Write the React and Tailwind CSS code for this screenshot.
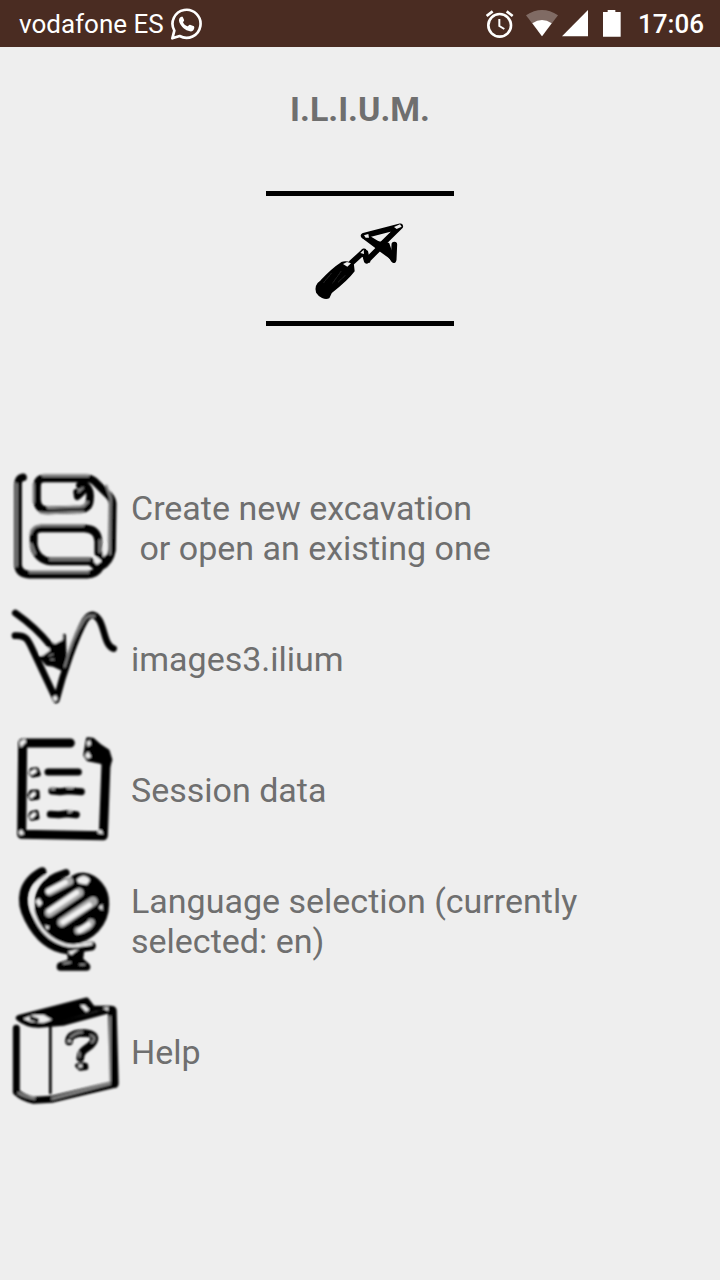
const StatusBar = () => (
  <header className="flex h-[47px] items-center justify-between bg-[#4a2c22] pl-[19px] pr-4 text-white">
    <div className="flex items-center gap-1.5">
      <span className="text-[26px] leading-8">vodafone ES</span>
      <svg className="h-8 w-8" viewBox="0 0 96 96" fill="none" stroke="currentColor">
        <path d="M7 91 L13 68 A42 42 0 1 1 29 84 Z" strokeWidth="8" strokeLinejoin="round" />
        <path
          d="M34 26 C28 28 25 35 28 43 C34 57 46 68 60 70 C67 71 72 66 73 59 L72 55 L60 50 C57 49 55 55 52 55 C46 53 41 48 39 43 C39 40 44 39 42 35 L38 26 Z"
          fill="currentColor"
          stroke="none"
        />
      </svg>
    </div>
    <div className="flex items-center">
      {/* Alarm */}
      <svg className="h-7 w-7" viewBox="0 0 84 84" fill="none" stroke="currentColor" strokeWidth="8">
        <circle cx="41" cy="46" r="34" />
        <path d="M40 27 V48 L55 57" strokeWidth="6" />
        <path d="M2 18 L20 4 M62 4 L80 18" />
      </svg>
      {/* Wifi */}
      <svg className="ml-3 h-7 w-8" viewBox="0 0 96 84" fill="currentColor">
        <path d="M0 16 Q48 -16 96 16 L48 79 Z" opacity="0.3" />
        <path d="M19 40 Q48 20 77 40 L48 79 Z" />
      </svg>
      {/* Mobile signal */}
      <svg className="ml-1 h-7 w-7" viewBox="0 0 84 84" fill="currentColor">
        <path d="M78 0 V79 H0 Z" />
      </svg>
      {/* Battery */}
      <svg className="ml-3 h-7 w-5" viewBox="0 0 60 84" fill="currentColor">
        <path d="M3 6 H17 V0 H40 V6 H56 V80 H3 Z" />
      </svg>
      <span className="ml-4 text-[26px] font-medium leading-8">17:06</span>
    </div>
  </header>
);

const TrowelLogo = () => (
  <svg className="h-[125px] w-[188px]" viewBox="48 348 564 375" fill="none" stroke="#000" strokeLinecap="round" strokeLinejoin="round">
    <g filter="url(#soften-light)">
      <path d="M341 467 L451 439 L387 502 Z" strokeWidth="17" />
      <path d="M343 468 L390 496 M400 490 L431 540 L433 494 M392 500 L350 542 L342 514 L305 548" strokeWidth="17" />
      <path d="M378 486 L415 491 L434 545 L416 530 L392 513 Z M338 510 L351 514 L358 545 L346 543 Z" fill="#000" strokeWidth="6" />
      <path
        d="M275 549 C285 545 302 547 309 555 L311 573 C291 600 265 620 243 637 L236 652 C226 658 208 649 201 637 C196 620 202 611 214 603 C232 583 252 564 275 549 Z"
        fill="#000"
        strokeWidth="6"
      />
      <path d="M245 579 L220 609 M273 574 L248 609 M286 586 L265 606" stroke="#222" strokeWidth="3" />
      <path d="M432 441 L450 433 L455 440 L440 447 Z M279 552 L291 546 L303 550 L292 560 Z M342 466 L355 462 L357 473 L347 473 Z M331 519 L341 509 L342 522 Z" fill="#eee" stroke="none" />
    </g>
  </svg>
);

const DisketteIcon = () => (
  <svg className="size-[131px] shrink-0" viewBox="0 6 393 393" fill="none" strokeLinecap="round" strokeLinejoin="round">
    <g filter="url(#soften)">
      <g stroke="#000" strokeWidth="23">
        <path d="M69 52 Q54 55 54 74 V315 Q56 342 88 344 H262 Q288 344 302 320 Q330 305 336 270 L338 130 Q337 118 328 108 L285 65 Q274 55 258 55 H134 C115 55 111 66 111 82 V120 C112 141 125 151 143 151 L245 148 C264 145 270 132 270 113 C272 92 263 76 245 74" />
        <path d="M238 76 L252 78 C254 94 244 99 232 110 L230 96" strokeWidth="20" />
        <path d="M101 222 C103 209 113 205 125 205 H253 C281 206 294 219 295 243 V279 L318 298 M101 222 V254 C106 287 128 303 151 304 H270 L294 323" />
      </g>
      <g stroke="#858585" strokeWidth="7">
        <path d="M50 72 V318 M129 48 H265 M101 72 V127 M121 157 Q135 161 151 159 L249 155 M264 126 L250 140 L144 144" />
        <path d="M92 221 C97 205 106 197 123 197 H250 M94 252 L105 281 M150 299 H268 M89 337 H265 M319 77 L332 114 L330 282 M299 241 V276 M248 84 L236 95" />
      </g>
      <path d="M280 303 L291 291 L303 303 L291 315 Z M306 266 L321 249 V281 L309 292 Z" fill="#eee" />
    </g>
  </svg>
);

const ExcavationIcon = () => (
  <svg className="size-[131px] shrink-0" viewBox="0 -6 393 393" fill="none" strokeLinecap="round" strokeLinejoin="round">
    <g filter="url(#soften)">
      <path d="M46 54 C86 82 117 109 151 151 M45 122 C76 120 83 132 94 156 L169 315 C190 232 228 123 255 76 C272 51 286 57 299 77 C315 106 314 151 341 161" stroke="#000" strokeWidth="20" />
      <path d="M148 150 L184 135 L193 121 L196 207 L187 223 L161 211 L141 208 L124 188 L145 170 Z" fill="#000" stroke="#000" strokeWidth="9" />
      <path d="M102 174 L168 312 L197 218" stroke="#000" strokeWidth="12" />
      <path d="M156 141 L189 121 L188 135 L165 147 Z M120 176 L145 157 L151 166 L127 183 Z M158 307 L168 300 L173 313 L164 320 Z" fill="#eee" />
      <path d="M147 182 L159 178 M152 193 L162 194" stroke="#888" strokeWidth="4" />
      <path d="M194 215 C212 150 232 106 251 77 C259 64 270 60 284 63" stroke="#888" strokeWidth="6" />
    </g>
  </svg>
);

const SessionIcon = () => (
  <svg className="size-[131px] shrink-0" viewBox="0 -3 393 393" fill="none" strokeLinecap="round" strokeLinejoin="round">
    <g filter="url(#soften)">
      <path d="M211 54 L68 54 L65 328 L310 332 L318 116" stroke="#000" strokeWidth="27" />
      <path d="M263 42 L278 43 L301 63 L324 78 L332 104 L326 124 L301 111 L264 104 L255 90 Z" fill="#000" stroke="#000" strokeWidth="10" />
      <path d="M144 141 H235 M156 198 L180 200 L205 197 L244 200 M151 268 L177 269 L200 266 L229 269" stroke="#000" strokeWidth="21" />
      <g stroke="#000" strokeWidth="13">
        <path d="M95 135 L110 133 L116 148 L98 151 L92 145 Z" />
        <path d="M94 201 L112 200 L113 218 L94 220 L89 211 Z" />
        <path d="M95 264 L109 261 L112 278 L95 281 L91 272 Z" />
      </g>
      <path d="M59 50 L73 42 L79 50 L62 68 Z M261 51 L270 45 L273 58 L263 66 Z M255 92 L264 79 L274 95 L263 101 Z M56 322 L64 313 L73 327 L61 331 Z M291 325 L303 313 L310 327 Z" fill="#eee" />
      <path d="M202 190 L218 190 M205 262 L214 260 M154 192 L163 193" stroke="#aaa" strokeWidth="5" />
      <path d="M95 144 L105 138 M94 214 L102 206 M95 275 L103 268" stroke="#fff" strokeWidth="10" />
    </g>
  </svg>
);

const GlobeIcon = () => (
  <svg className="size-[131px] shrink-0" viewBox="0 0 393 393" fill="none" strokeLinecap="round" strokeLinejoin="round">
    <g filter="url(#soften)">
      <path d="M126 50 C65 83 58 138 86 191 C114 246 155 279 202 284 L274 273" stroke="#000" strokeWidth="27" />
      <path d="M118 120 C130 80 160 65 198 53" stroke="#000" strokeWidth="22" />
      <path d="M213 75 C220 66 236 59 252 61 C288 65 322 101 320 148 C320 208 274 254 216 261 C166 261 119 223 111 168 L112 128 C118 107 130 92 146 82 Z" fill="#000" stroke="#000" strokeWidth="15" />
      <path d="M213 286 L216 323 L183 333 M182 335 H259 L237 316 L241 286" stroke="#000" strokeWidth="24" />
      <path d="M222 288 L228 334" stroke="#000" strokeWidth="18" />
      <g stroke="#a8a8a8" strokeWidth="28">
        <path d="M148 110 L208 79" strokeWidth="24" />
        <path d="M148 173 L237 113" />
        <path d="M186 202 L279 139" />
        <path d="M234 227 Q266 220 273 202" strokeWidth="22" />
      </g>
      <g stroke="#f1f1f1" strokeWidth="15">
        <path d="M145 109 L196 82" />
        <path d="M148 168 L230 113" />
        <path d="M189 201 L268 150" />
        <path d="M239 226 L265 208" />
      </g>
      <path d="M230 74 C241 60 260 58 270 75 L261 89 L236 85 Z M107 139 L117 129 L127 144 L117 156 Z M296 157 L307 147 L308 167 Z M135 210 L149 215 L141 226 Z M203 290 L238 281 L214 300 Z" fill="#eee" />
      <path d="M135 64 C94 94 83 132 103 181 C121 229 154 257 193 269 C224 279 245 269 273 266" stroke="#eee" strokeWidth="9" />
      <path d="M191 326 L212 322 M240 329 L253 329" stroke="#999" strokeWidth="5" />
    </g>
  </svg>
);

const HelpIcon = () => (
  <svg className="size-[131px] shrink-0" viewBox="0 3 393 393" fill="none" strokeLinecap="round" strokeLinejoin="round">
    <g filter="url(#soften)">
      <path d="M49 130 V321 Q70 340 101 346 L154 343 L343 298" stroke="#000" strokeWidth="21" />
      <path d="M337 76 L343 296" stroke="#000" strokeWidth="26" />
      <path d="M55 99 Q78 119 116 121 L189 115 L323 78 L335 72 M57 97 L260 45 L278 69 L334 70" stroke="#000" strokeWidth="15" />
      <path d="M79 89 L258 45 L276 71 L309 73 L176 113 L129 109 Z" fill="#000" />
      <path d="M70 101 L100 89 L132 90 L156 104 L130 113 L92 110 Z M240 61 L254 60 L268 74 L258 81 Z M308 69 L325 67 L325 78 Z" fill="#eee" />
      <path d="M95 100 L111 105" stroke="#111" strokeWidth="13" />
      <path d="M129 81 L158 91 L160 106 L238 84 L240 62 L200 60 Z" fill="#000" />
      <path d="M151 125 V324" stroke="#000" strokeWidth="8" />
      <path d="M331 95 V290" stroke="#999" strokeWidth="5" />
      <path d="M156 341 L330 296 M55 324 Q77 338 104 341" stroke="#999" strokeWidth="6" />
      <path d="M207 169 C206 149 230 144 254 144 C278 146 290 155 279 172 C268 191 241 192 241 219" stroke="#000" strokeWidth="23" />
      <path d="M211 157 Q226 142 247 142 M271 150 Q292 157 275 173 M239 203 L239 216" stroke="#999" strokeWidth="5" />
      <path d="M231 242 L243 237 L258 240 L259 249 L240 251 Z" stroke="#000" strokeWidth="12" fill="#eee" />
      <path d="M201 170 L209 162 L214 171 Z M235 240 L246 238 L246 247 L237 248 Z" fill="#eee" />
    </g>
  </svg>
);

const menuItems = [
  {
    id: 'excavation',
    icon: DisketteIcon,
    label: (
      <>
        Create new excavation
        <br />
        &nbsp;or open an existing one
      </>
    ),
  },
  { id: 'file', icon: ExcavationIcon, label: 'images3.ilium' },
  { id: 'session', icon: SessionIcon, label: 'Session data' },
  { id: 'language', icon: GlobeIcon, label: 'Language selection (currently selected: en)' },
  { id: 'help', icon: HelpIcon, label: 'Help' },
];

export default function App() {
  return (
    <div className="min-h-screen bg-[#eeeeee] font-[Roboto,sans-serif]">
      {/* Shared soft edges for the ink drawings */}
      <svg className="absolute h-0 w-0" aria-hidden="true">
        <filter id="soften">
          <feGaussianBlur stdDeviation="3" />
        </filter>
        <filter id="soften-light">
          <feGaussianBlur stdDeviation="1.5" />
        </filter>
      </svg>

      <StatusBar />

      <main>
        <div className="flex flex-col items-center pt-[42px]">
          <h1 className="text-[34px] font-bold leading-10 text-[#6f6f6f]">I.L.I.U.M.</h1>
          <div className="mt-[62px] border-y-5 border-black">
            <TrowelLogo />
          </div>
        </div>

        <nav className="mt-[136px] flex flex-col">
          {menuItems.map(({ id, icon: Icon, label }) => (
            <button key={id} type="button" className="flex items-center pr-4 text-left">
              <Icon />
              <span className="text-[34px] leading-10 text-[#6f6f6f]">{label}</span>
            </button>
          ))}
        </nav>
      </main>
    </div>
  );
}
